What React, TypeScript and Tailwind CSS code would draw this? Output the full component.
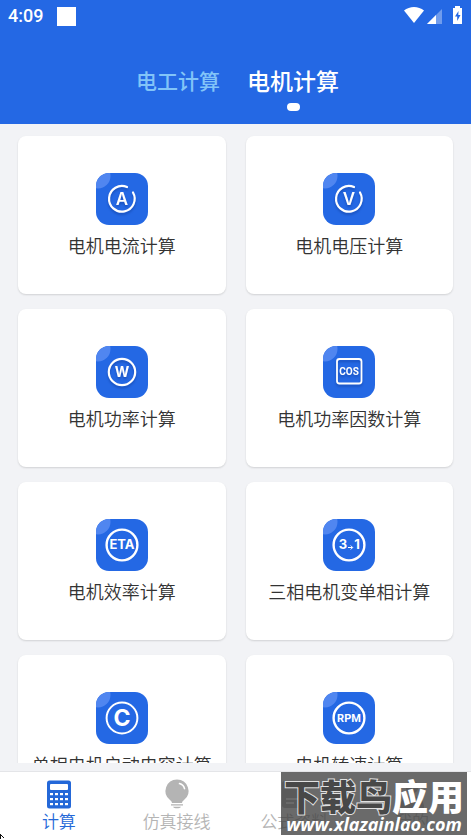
import type { ReactNode } from 'react';

const lettering = {
  fill: '#fff',
  textAnchor: 'middle' as const,
  fontFamily: 'Inter, "Liberation Sans", sans-serif',
};

const narrowLettering = {
  ...lettering,
  fontFamily: 'Roboto, "Liberation Sans", sans-serif',
};

function Tile({ children }: { children: ReactNode }) {
  return (
    <span className="block w-[52px] h-[52px] rounded-[13px] overflow-hidden bg-[#2468e4]">
      <svg viewBox="0 0 52 52" className="w-full h-full" aria-hidden="true">
        <circle cx="2" cy="3" r="12.5" fill="#5086f0" />
        {children}
      </svg>
    </span>
  );
}

function OpenRing({ letter }: { letter: string }) {
  return (
    <g className="drop-shadow-[0_2px_1px_rgba(10,50,140,0.45)]">
      <path
        d="M31 14.1 A12.8 12.8 0 1 0 37 19.5"
        fill="none"
        stroke="#fff"
        strokeWidth="2.2"
        strokeLinecap="round"
      />
      <text {...lettering} x="26" y="32" fontSize="17" fontWeight="600">
        {letter}
      </text>
    </g>
  );
}

function Ring({ r, width = 2.4, children }: { r: number; width?: number; children: ReactNode }) {
  return (
    <g>
      <circle cx="26" cy="26" r={r} fill="none" stroke="#fff" strokeWidth={width} />
      {children}
    </g>
  );
}

const calculators = [
  { label: '电机电流计算', icon: <OpenRing letter="A" /> },
  { label: '电机电压计算', icon: <OpenRing letter="V" /> },
  {
    label: '电机功率计算',
    icon: (
      <g className="drop-shadow-[0_2px_1px_rgba(10,50,140,0.45)]">
        <Ring r={13.2} width={2.2}>
          <text {...lettering} x="26" y="31" fontSize="14" fontWeight="700">W</text>
        </Ring>
      </g>
    ),
  },
  {
    label: '电机功率因数计算',
    icon: (
      <g className="drop-shadow-[0_2px_1px_rgba(10,50,140,0.45)]">
        <rect x="14" y="13" width="24.5" height="24.5" rx="2.5" fill="none" stroke="#fff" strokeWidth="1.8" />
        <text {...narrowLettering} x="26" y="29" fontSize="10" fontWeight="700">COS</text>
      </g>
    ),
  },
  {
    label: '电机效率计算',
    icon: (
      <Ring r={15.4}>
        <text {...lettering} x="26" y="30" fontSize="13" fontWeight="700">ETA</text>
      </Ring>
    ),
  },
  {
    label: '三相电机变单相计算',
    icon: (
      <Ring r={15.4}>
        <text {...lettering} x="20" y="30" fontSize="13" fontWeight="700">3</text>
        <path d="M25 28.5h4.5M27.7 26.5l2 2-2 2" fill="none" stroke="#fff" strokeWidth="1" />
        <text {...lettering} x="34" y="30" fontSize="13" fontWeight="700">1</text>
      </Ring>
    ),
  },
  {
    label: '单相电机启动电容计算',
    icon: (
      <Ring r={15.4} width={2}>
        <text {...lettering} x="26" y="34" fontSize="23" fontWeight="700">C</text>
      </Ring>
    ),
  },
  {
    label: '电机转速计算',
    icon: (
      <Ring r={15.4}>
        <text {...narrowLettering} x="26" y="30" fontSize="11" fontWeight="700">RPM</text>
      </Ring>
    ),
  },
];

const navItems = [
  {
    label: '计算',
    icon: (
      <>
        <rect x="2" y="0.5" width="24" height="28" rx="2.5" fill="currentColor" />
        <rect x="5" y="4" width="18" height="6" rx="1" fill="#fff" />
        {[13, 18, 23].map((y) =>
          [5, 10, 15, 20].map((x) => (
            <rect key={`${x}-${y}`} x={x} y={y} width="3" height="2.2" fill="#fff" />
          ))
        )}
      </>
    ),
  },
  {
    label: '仿真接线',
    icon: (
      <>
        <path
          d="M14 -0.5a11.5 11.5 0 0 0-7 20.6c1.2.9 1.7 1.7 2 2.9h10c.3-1.2.8-2 2-2.9A11.5 11.5 0 0 0 14-.5z"
          fill="currentColor"
        />
        <path d="M16.5 3.6c2.6.7 4.3 2.4 5 5" fill="none" stroke="#fff" strokeWidth="1.6" strokeLinecap="round" />
        <path d="M8 24.2h12v1.4H8zM10 26.8h8c-1 2-7 2-8 0z" fill="currentColor" />
      </>
    ),
  },
  {
    label: '公式资料',
    icon: (
      <>
        <rect x="2" y="1" width="22" height="27" rx="3" fill="currentColor" />
        <path d="M6 19h12M6 23h8" stroke="#fff" strokeWidth="1.8" />
      </>
    ),
  },
  {
    label: '我的',
    icon: (
      <>
        <circle cx="14" cy="7" r="6.5" fill="currentColor" />
        <path d="M2 28c0-8 4.5-12 12-12s12 4 12 12z" fill="currentColor" />
      </>
    ),
  },
];

function StatusBar() {
  return (
    <div className="flex items-center h-8 pl-2 pr-[9px] text-white">
      <span className="font-[Roboto,sans-serif] text-lg leading-8 font-medium">4:09</span>
      <span className="ml-[14px] w-[19px] h-[19px] bg-white" />
      <svg viewBox="0 0 58 20" className="ml-auto w-[58px] h-5" aria-hidden="true">
        <path d="M0 4.5C5.5-.2 14.5-.2 20 4.5L10 17z" fill="#fff" />
        <path d="M38 3v15H23z" fill="#fff" opacity=".35" />
        <path d="M32 9v9h-9z" fill="#fff" />
        <path d="M51 0h5v2h2v16h-9V2h2z" fill="#fff" />
        <path d="M54.5 5L51 10.5h2.2V15l3.3-6h-2.2z" fill="#2468e4" />
      </svg>
    </div>
  );
}

export default function App() {
  return (
    <div className="relative flex flex-col h-screen overflow-hidden bg-[#f2f3f6] font-['Noto_Sans_CJK_SC',sans-serif]">
      <header className="shrink-0 bg-[#2468e4]">
        <StatusBar />
        <div className="flex justify-center gap-[27px] h-[92px] pt-8 pl-1">
          <button className="h-8 text-[21px] leading-8 font-medium text-[#82c4f8]">电工计算</button>
          <button className="flex flex-col items-center h-12 text-[23px] leading-8 font-medium text-white">
            电机计算
            <span className="mt-[7px] w-[13px] h-2 rounded-full bg-white" />
          </button>
        </div>
      </header>

      <main className="flex-1 min-h-0 overflow-hidden mb-2 px-[18px] pt-3">
        <div className="grid grid-cols-2 gap-x-5 gap-y-[15px]">
          {calculators.map((item) => (
            <button
              key={item.label}
              className="flex flex-col items-center h-[158px] pt-[37px] rounded-lg bg-white shadow-[0_1px_2px_rgba(0,0,0,0.14)]"
            >
              <Tile>{item.icon}</Tile>
              <span className="mt-2 text-lg leading-6 font-[350] text-[#333333] whitespace-nowrap">{item.label}</span>
            </button>
          ))}
        </div>
      </main>

      <nav className="shrink-0 grid grid-cols-4 h-[68px] border-t border-[#e4e5e8] bg-white">
        {navItems.map((item, i) => (
          <button
            key={item.label}
            className={`flex flex-col items-center pt-2 ${i === 0 ? 'text-[#2468d8]' : 'text-[#b4b4b4]'}`}
          >
            <svg viewBox="0 0 28 29" className="w-7 h-[29px] overflow-visible" aria-hidden="true">
              {item.icon}
            </svg>
            <span className="text-[17px] leading-6 font-[350]">{item.label}</span>
          </button>
        ))}
      </nav>

      {/* site watermark */}
      <div className="absolute right-1 bottom-1 w-[186px] h-[63px] flex flex-col items-center bg-[#404040]/78 text-white">
        <p className="flex pt-1 text-[36px] leading-[38px] font-black whitespace-nowrap">
          <span className="text-[#484848] [-webkit-text-stroke:2px_#e0e0e0] [paint-order:stroke_fill]">下载鸟</span>
          <span>应用</span>
        </p>
        <p className="font-['Open_Sans',sans-serif] text-[18px] leading-5 font-bold italic">www.xlazainlao.com</p>
      </div>

      <svg viewBox="0 0 4 5" className="absolute left-0 bottom-0 w-1 h-[5px]" aria-hidden="true">
        <path d="M0 0h1v1h1v1h1v1h1v1H3V3H2V2H1v3H0z" fill="#111" />
      </svg>
    </div>
  );
}
